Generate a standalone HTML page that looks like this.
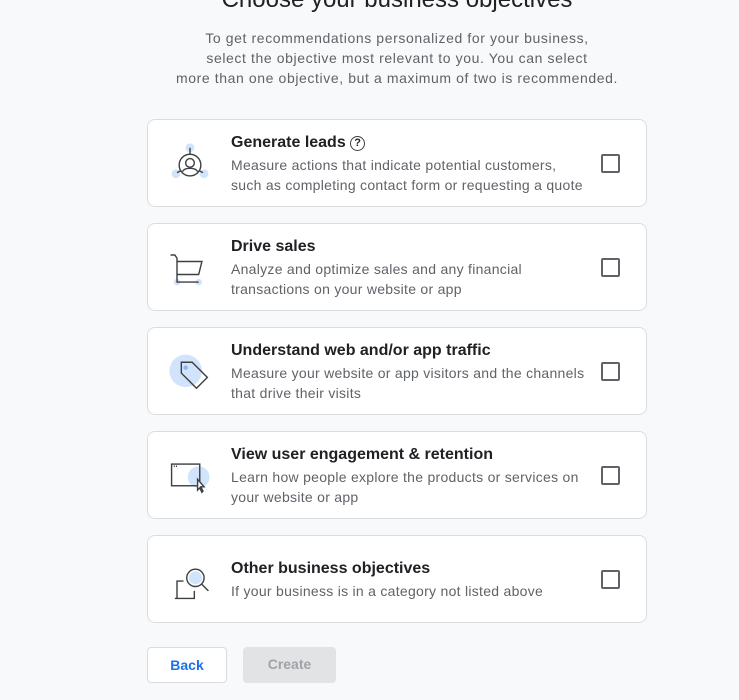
<!DOCTYPE html>
<html><head><meta charset="utf-8"><style>
*{box-sizing:border-box;margin:0;padding:0}
body{width:739px;height:700px;overflow:hidden;background:#f8f9fa;font-family:"Liberation Sans",Arial,sans-serif;position:relative}
h1{position:absolute;top:-14px;left:0;width:794px;text-align:center;font-size:24px;font-weight:400;color:#202124;line-height:28px}
.intro{position:absolute;top:28px;left:0;width:794px;text-align:center;font-size:14px;line-height:20px;color:#5f6368;letter-spacing:0.6px}
.card{position:absolute;left:147px;width:500px;height:88px;background:#fff;border:1px solid #dadce0;border-radius:8px}
.icon{position:absolute;left:16px;top:18px;width:52px;height:52px}
.t{position:absolute;left:83px;font-size:16px;font-weight:bold;color:#202124;line-height:20px}
.d{position:absolute;left:83px;font-size:14px;color:#5f6368;line-height:20px;width:370px;letter-spacing:0.28px}
.cb{position:absolute;left:453px;top:34px;width:19px;height:19px;border:2px solid #5f6368;border-radius:2px}
.btn{position:absolute;top:647px;height:36px;border-radius:4px;font-size:14px;font-weight:bold;text-align:center;line-height:34px}
</style></head><body>
<h1>Choose your business objectives</h1>
<div class="intro">To get recommendations personalized for your business,<br>select the objective most relevant to you. You can select<br>more than one objective, but a maximum of two is recommended.</div>

<div class="card" style="top:119px">
<svg class="icon" viewBox="0 0 48 48" fill="none" stroke="#3c4043" stroke-width="1.3">
<circle cx="24" cy="9" r="4" fill="#d2e3fc" stroke="none"/><circle cx="11" cy="33" r="4" fill="#d2e3fc" stroke="none"/><circle cx="37" cy="33" r="4" fill="#d2e3fc" stroke="none"/>
<circle cx="24" cy="25" r="10"/><circle cx="24" cy="23" r="4"/><path d="M17 31c2-4 12-4 14 0"/><path d="M24 9v6M12 32l4-2M36 32l-4-2"/></svg>
<div class="t" style="top:13px">Generate leads <span style="display:inline-block;width:15px;height:15px;border:1.5px solid #3c4043;border-radius:50%;font-size:11px;line-height:12px;text-align:center;vertical-align:1px">?</span></div>
<div class="d" style="top:35px">Measure actions that indicate potential customers,<br>such as completing contact form or requesting a quote</div>
<div class="cb"></div></div>

<div class="card" style="top:223px">
<svg class="icon" viewBox="0 0 48 48" fill="none" stroke="#3c4043" stroke-width="1.3">
<circle cx="12" cy="37" r="3" fill="#d2e3fc" stroke="none"/><circle cx="32" cy="37" r="3" fill="#d2e3fc" stroke="none"/>
<path d="M6 12h4l2 3v22h20M12 18h23l-3 12H12"/></svg>
<div class="t" style="top:13px">Drive sales</div>
<div class="d" style="top:35px">Analyze and optimize sales and any financial<br>transactions on your website or app</div>
<div class="cb"></div></div>

<div class="card" style="top:327px">
<svg class="icon" viewBox="0 0 48 48" fill="none" stroke="#3c4043" stroke-width="1.3">
<circle cx="20" cy="23" r="15" fill="#d2e3fc" stroke="none"/><circle cx="20" cy="20" r="2" fill="#8ab4f8" stroke="none"/>
<path d="M16 15l10 0 14 14-10 10-14-14z"/></svg>
<div class="t" style="top:13px">Understand web and/or app traffic</div>
<div class="d" style="top:35px">Measure your website or app visitors and the channels<br>that drive their visits</div>
<div class="cb"></div></div>

<div class="card" style="top:431px">
<svg class="icon" viewBox="0 0 48 48" fill="none" stroke="#3c4043" stroke-width="1.3">
<circle cx="32" cy="25" r="10" fill="#d2e3fc" stroke="none"/>
<rect x="7" y="13" width="26" height="20"/><path d="M9 15h1M11 15h1"/><path d="M31 27l0 10 2-2 2 4 1-1-2-4 3 0z" fill="#fff"/></svg>
<div class="t" style="top:13px">View user engagement &amp; retention</div>
<div class="d" style="top:35px">Learn how people explore the products or services on<br>your website or app</div>
<div class="cb"></div></div>

<div class="card" style="top:535px">
<svg class="icon" viewBox="0 0 48 48" fill="none" stroke="#3c4043" stroke-width="1.3">
<circle cx="29" cy="22" r="6" fill="#d2e3fc" stroke="none"/>
<path d="M10 41h18V34M12 41V25h6"/><circle cx="29" cy="22" r="8"/><path d="M35 28l6 6"/></svg>
<div class="t" style="top:23px">Other business objectives</div>
<div class="d" style="top:45px">If your business is in a category not listed above</div>
<div class="cb"></div></div>

<div class="btn" style="left:147px;width:80px;border:1px solid #dadce0;background:#fff;color:#1a73e8">Back</div>
<div class="btn" style="left:243px;width:93px;background:#e2e3e5;color:#a0a4a8">Create</div>
</body></html>
